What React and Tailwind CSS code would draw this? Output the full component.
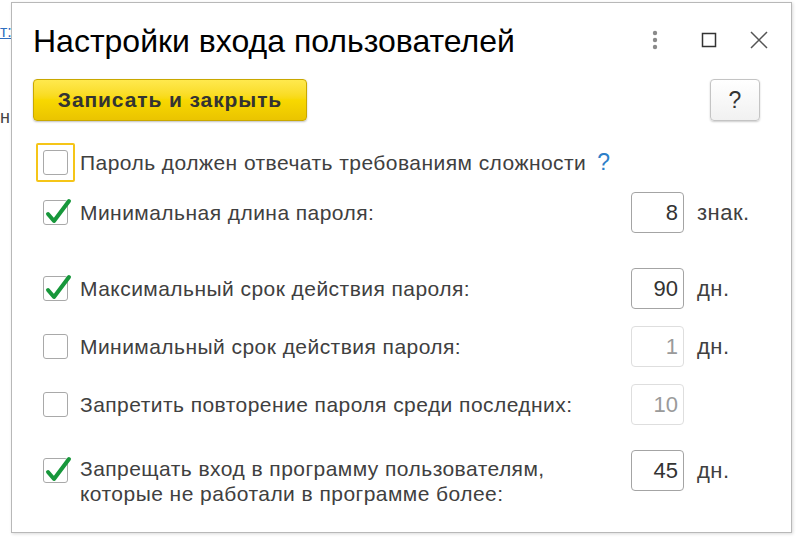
const font = { fontFamily: '"Liberation Sans", Arial, sans-serif' }

function Box({ checked, focused }) {
  return (
    <div
      className={
        "w-[39px] h-[39px] flex items-center justify-center shrink-0 rounded-[2px] " +
        (focused ? "border-2 border-[#f5c518]" : "border-2 border-transparent")
      }
    >
      <div className="relative w-[25px] h-[25px] rounded-[3px] border border-[#a9a9a9] bg-white">
        {checked && (
          <svg className="absolute -left-[1px] -top-[3px]" width="30" height="28" viewBox="0 0 30 28">
            <path d="M5 16 L11 23 L26 3" fill="none" stroke="#17973b" strokeWidth="4" strokeLinecap="round" strokeLinejoin="round" />
          </svg>
        )}
      </div>
    </div>
  )
}

function Field({ value, disabled }) {
  return (
    <div
      className={
        "w-[53px] h-[41px] rounded-[4px] border flex items-center justify-end pr-[5px] text-[22px] bg-white " +
        (disabled ? "border-[#dedede] text-[#9a9a9a]" : "border-[#a4a4a4] text-[#333]")
      }
    >
      {value}
    </div>
  )
}

function Row({ checked, label, value, unit, disabled, className }) {
  return (
    <div className={"flex items-center h-[41px] " + (className || "")}>
      <div className="w-[44px] flex justify-start">
        <Box checked={checked} />
      </div>
      <div className="w-[551px] text-[21px] text-[#404040] tracking-[0.45px]">{label}</div>
      <Field value={value} disabled={disabled} />
      <div className="ml-[13px] text-[22px] text-[#404040] tracking-[0.5px]">{unit}</div>
    </div>
  )
}

export default function App() {
  return (
    <div className="relative w-[800px] h-[537px] bg-white overflow-hidden" style={font}>
      {/* page behind the dialog */}
      <span className="absolute left-0 top-[20px] text-[16px] text-[#2f6fc0] underline">т:</span>
      <span className="absolute left-0 top-[104px] text-[18px] text-[#444]">н</span>

      <div className="absolute left-[11px] top-[2px] w-[781px] h-[531px] bg-white border border-[#b8b8b8] shadow-[1px_1px_3px_rgba(0,0,0,0.15)] flex flex-col">
        <div className="flex items-center h-[73px] pl-[21px] pr-[22px]">
          <h1 className="text-[32px] text-black leading-none flex-1 pt-[2px]">Настройки входа пользователей</h1>
          <div className="flex items-center">
            <svg width="12" height="20" viewBox="0 0 12 20">
              <circle cx="6" cy="3" r="2.2" fill="#8a8a8a" />
              <circle cx="6" cy="10" r="2.2" fill="#8a8a8a" />
              <circle cx="6" cy="17" r="2.2" fill="#8a8a8a" />
            </svg>
            <svg className="ml-[40px]" width="16" height="16" viewBox="0 0 16 16">
              <rect x="1.5" y="1.5" width="13" height="13" fill="none" stroke="#333" strokeWidth="1.5" />
            </svg>
            <svg className="ml-[32px]" width="20" height="20" viewBox="0 0 20 20">
              <path d="M2 2 L18 18 M18 2 L2 18" stroke="#555" strokeWidth="1.5" />
            </svg>
          </div>
        </div>

        <div className="flex items-center justify-between pl-[21px] pr-[31px] mt-[3px]">
          <button className="w-[274px] h-[42px] rounded-[4px] border border-[#c9a800] bg-gradient-to-b from-[#ffe94d] via-[#f8d800] to-[#eac400] shadow-[0_1px_2px_rgba(0,0,0,0.25)] text-[21px] font-bold text-[#333] tracking-[0.9px]">
            Записать и закрыть
          </button>
          <button className="w-[50px] h-[42px] rounded-[4px] border border-[#c4c4c4] bg-gradient-to-b from-white to-[#f1f1f1] shadow-[0_1px_2px_rgba(0,0,0,0.2)] text-[23px] text-[#333]">
            ?
          </button>
        </div>

        <div className="pl-[24px] flex flex-col">
          <div className="flex items-center h-[39px] mt-[22px]">
            <Box focused />
            <span className="ml-[5px] text-[21px] text-[#404040] tracking-[0.45px]">
              Пароль должен отвечать требованиям сложности
            </span>
            <span className="ml-[11px] text-[23px] text-[#2d7fc9]">?</span>
          </div>

          <Row className="mt-[10px]" checked label="Минимальная длина пароля:" value="8" unit="знак." />
          <Row className="mt-[35px]" checked label="Максимальный срок действия пароля:" value="90" unit="дн." />
          <Row className="mt-[17px]" label="Минимальный срок действия пароля:" value="1" unit="дн." disabled />
          <Row className="mt-[17px]" label="Запретить повторение пароля среди последних:" value="10" unit="" disabled />

          <div className="flex items-start mt-[25px]">
            <div className="w-[44px] pt-[1px]">
              <Box checked />
            </div>
            <div className="w-[551px] text-[21px] leading-[25px] text-[#404040] tracking-[0.45px] pt-[6px]">
              Запрещать вход в программу пользователям,
              <br />
              которые не работали в программе более:
            </div>
            <Field value="45" />
            <div className="ml-[13px] text-[22px] text-[#404040] tracking-[0.5px] h-[41px] flex items-center">дн.</div>
          </div>
        </div>
      </div>
    </div>
  )
}
